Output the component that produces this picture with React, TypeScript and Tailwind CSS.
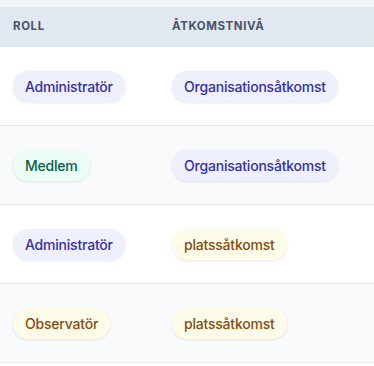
import React from "react";

type Tone = "indigo" | "emerald" | "amber";

const toneClass: Record<Tone, string> = {
  indigo: "bg-[#eef0fd] text-[#3730a3]",
  emerald: "bg-[#ecfdf5] text-[#065f46]",
  amber: "bg-[#fefce8] text-[#854d0e]",
};

function Badge({ label, tone }: { label: string; tone: Tone }) {
  return (
    <span
      className={`inline-flex h-[31px] items-center rounded-full px-3 text-[14px] font-medium tracking-[-0.015em] shadow-[0_1px_3px_rgba(15,23,42,0.10)] ${toneClass[tone]}`}
    >
      {label}
    </span>
  );
}

const rows: { role: string; roleTone: Tone; access: string; accessTone: Tone }[] = [
  { role: "Administratör", roleTone: "indigo", access: "Organisationsåtkomst", accessTone: "indigo" },
  { role: "Medlem", roleTone: "emerald", access: "Organisationsåtkomst", accessTone: "indigo" },
  { role: "Administratör", roleTone: "indigo", access: "platssåtkomst", accessTone: "amber" },
  { role: "Observatör", roleTone: "amber", access: "platssåtkomst", accessTone: "amber" },
];

export default function App() {
  return (
    <div
      className="min-h-[366px] w-[374px] overflow-hidden bg-white"
      style={{ fontFamily: "Inter, 'Noto Sans', sans-serif" }}
    >
      <div className="h-[7px] bg-[#f1f5f9]" />
      <div className="grid h-[40px] grid-cols-[172px_1fr] items-center bg-[#e2e8f0] text-[11.5px] font-bold uppercase tracking-[0.05em] text-[#475569]">
        <div className="pl-[13px]">Roll</div>
        <div>Åtkomstnivå</div>
      </div>
      {rows.map((r, i) => (
        <div
          key={i}
          className={`grid h-[79px] grid-cols-[172px_1fr] items-center border-b border-[#e5e9f0] ${
            i % 2 === 1 ? "bg-[#f8fafc]" : "bg-white"
          }`}
        >
          <div className="pl-[13px]">
            <Badge label={r.role} tone={r.roleTone} />
          </div>
          <div>
            <Badge label={r.access} tone={r.accessTone} />
          </div>
        </div>
      ))}
    </div>
  );
}
